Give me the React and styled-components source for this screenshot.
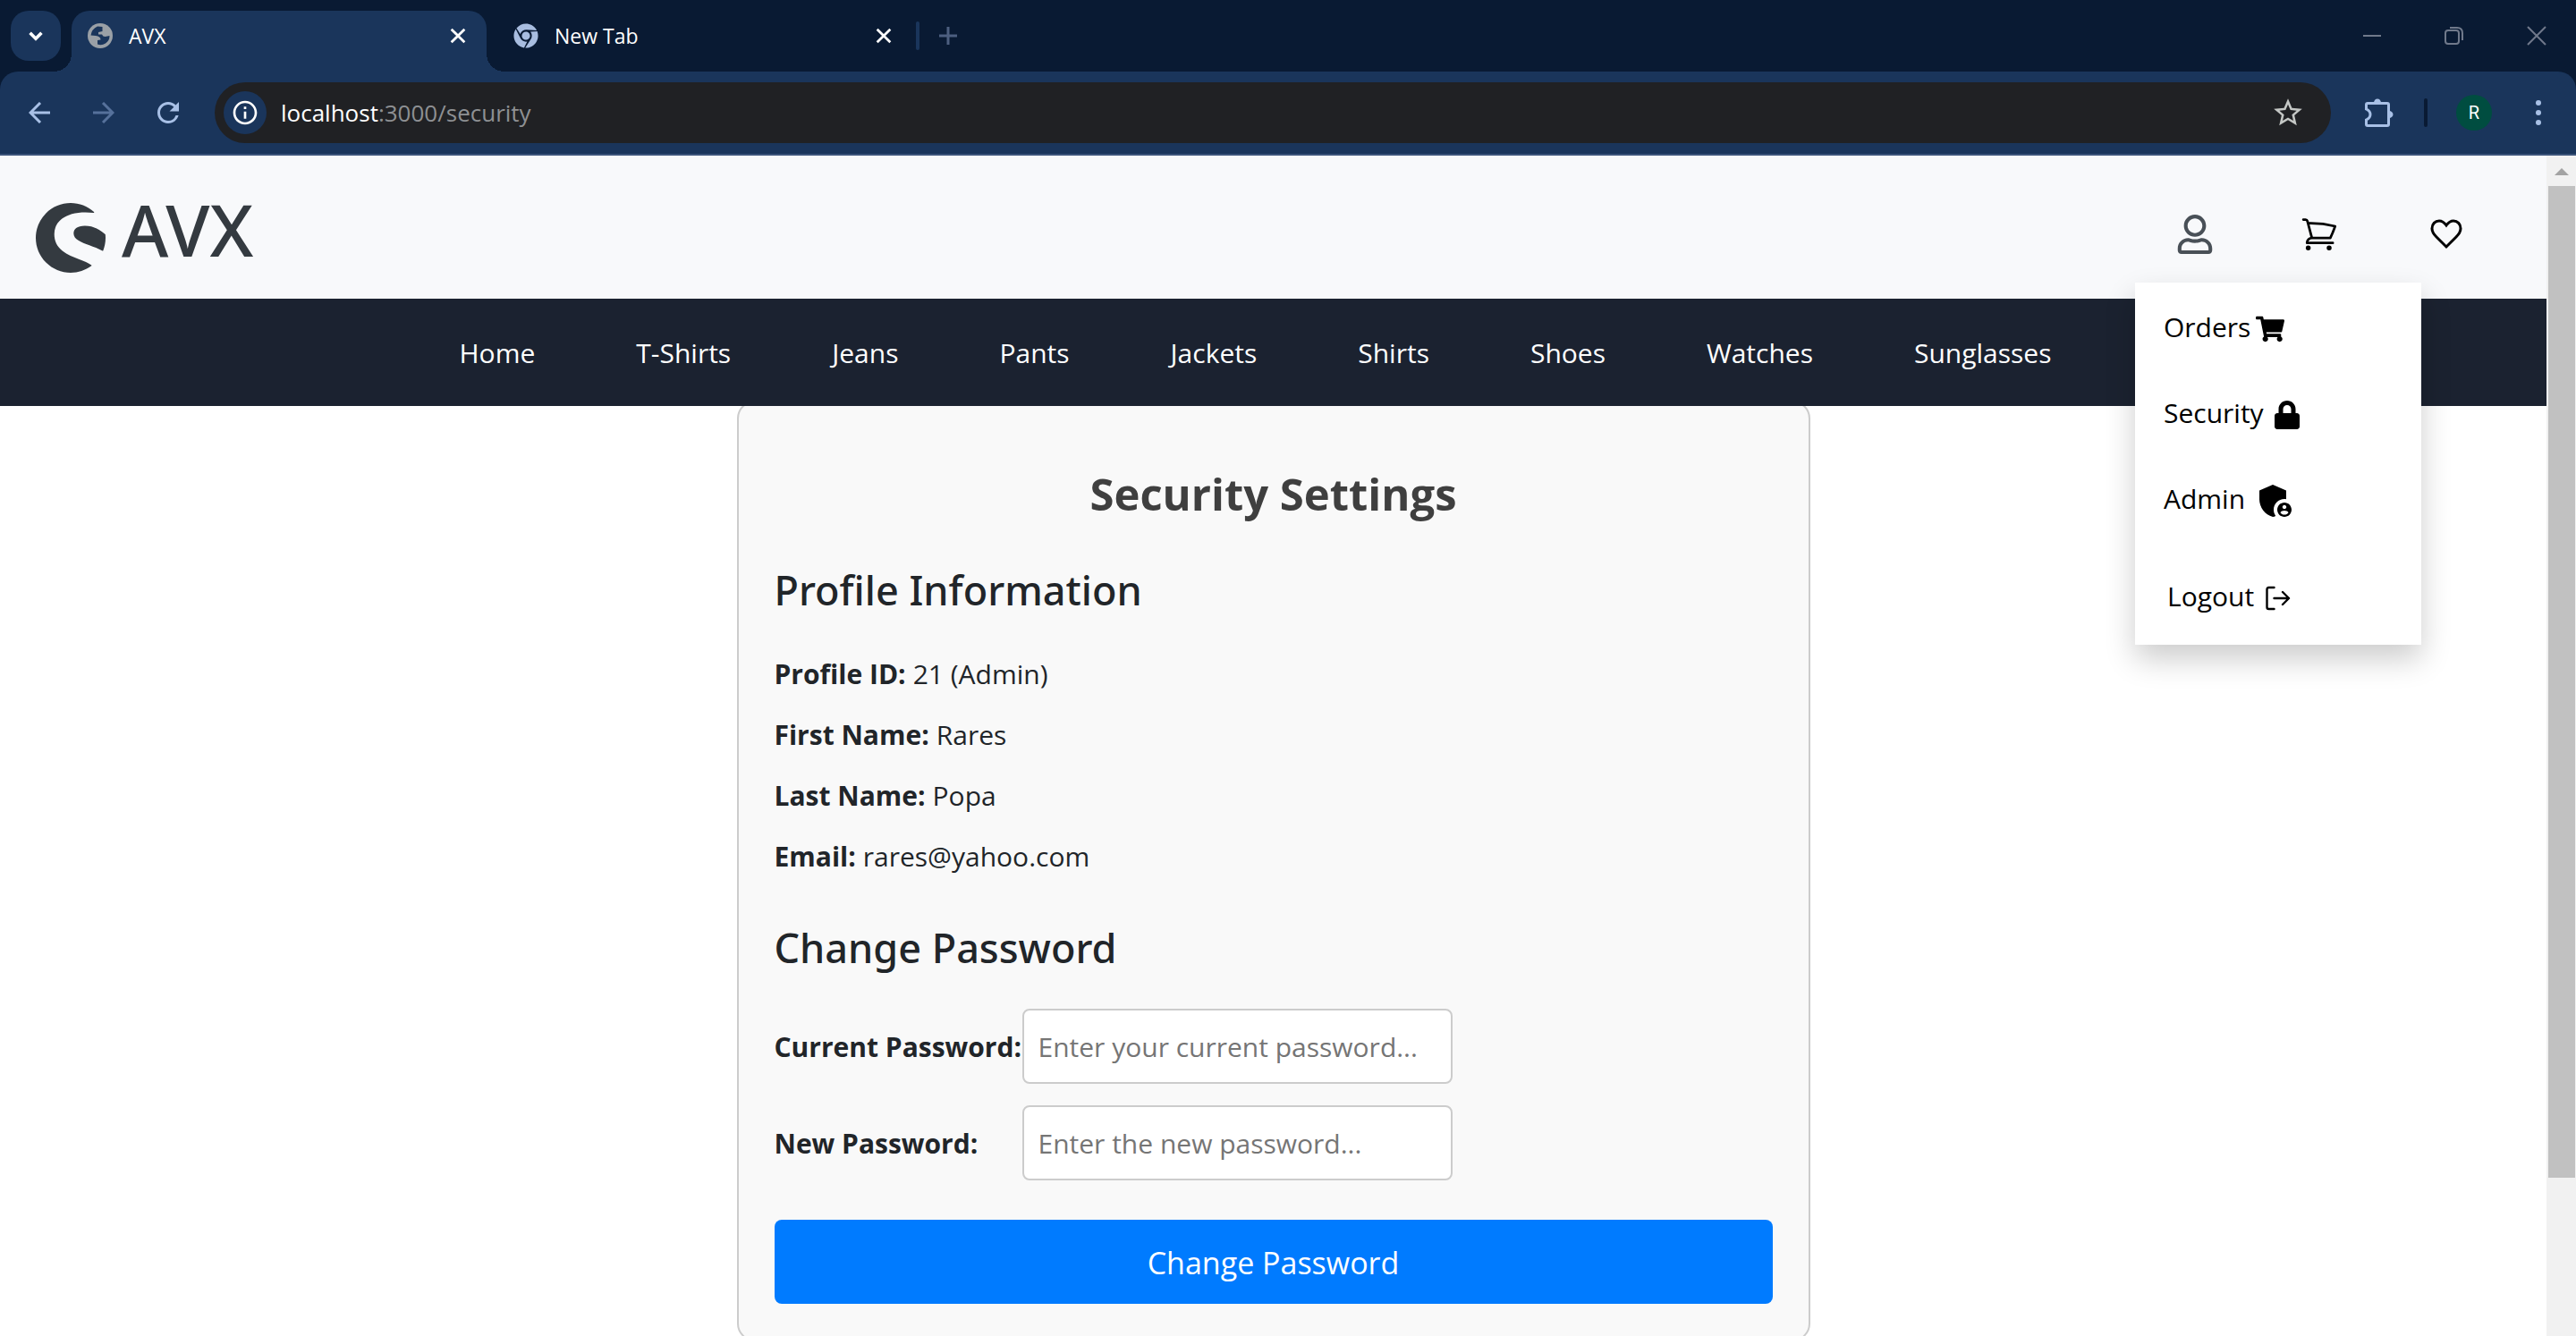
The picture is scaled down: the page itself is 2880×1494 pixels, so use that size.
import React from "react";
import styled, { createGlobalStyle } from "styled-components";
import { FaRegUser, FaShoppingCart, FaLock, FaChrome } from "react-icons/fa";
import { HiOutlineShoppingCart } from "react-icons/hi2";
import { MdAdminPanelSettings, MdStarOutline, MdRefresh, MdOutlineInfo } from "react-icons/md";
import { SiShopware } from "react-icons/si";

const Global = createGlobalStyle`
  * { box-sizing: border-box; }
  body { margin: 0; overflow: hidden; background: #fff; }
  body, button, input { font-family: "Open Sans", "Noto Sans", sans-serif; }
  h1, h2, p, dl, dd, ul { margin: 0; padding: 0; }
  svg { display: block; flex: none; }
`;
const Window = styled.div`display: flex; flex-direction: column; height: 100vh; overflow: hidden;`;
const IconButton = styled.button`
  display: flex; align-items: center; justify-content: center; flex: none;
  width: 48px; height: 48px; padding: 0; border: 0; background: none;
  color: ${(p) => p.$color || "#a8c0e6"};
`;

/* Browser frame */
const TabStrip = styled.div`display: flex; align-items: flex-end; height: 80px; padding: 0 20px 0 12px; background: #091a33; flex: none;`;
const TabSearch = styled.button`
  display: flex; align-items: center; justify-content: center; width: 56px; height: 56px; margin: 0 12px 12px 0;
  padding: 0; border: 0; border-radius: 20px; background: #1a355b; color: #fff;
`;
const Tabs = styled.div`display: flex; gap: 12px;`;
const Tab = styled.div`
  position: relative; display: flex; align-items: center; gap: 18px; width: 464px; height: 68px;
  padding: 0 8px 12px 18px; border-radius: 20px 20px 0 0; color: #fff; font-size: 23px; line-height: 32px;
  background: ${(p) => (p.$active ? "#1a355b" : "transparent")};
  &::before, &::after {
    content: ${(p) => (p.$active ? '""' : "none")}; position: absolute; bottom: 0; width: 20px; height: 20px;
  }
  &::before { right: 100%; background: radial-gradient(circle at 0 0, transparent 20px, #1a355b 20px); }
  &::after { left: 100%; background: radial-gradient(circle at 100% 0, transparent 20px, #1a355b 20px); }
  & > span { flex: 1; }
`;
const TabDivider = styled.span`width: 4px; height: 32px; margin: 0 8px 24px 4px; border-radius: 2px; background: #1a355b;`;
const NewTab = styled.div`display: flex; padding-bottom: 16px;`;
const WindowControls = styled.div`display: flex; gap: 44px; margin-left: auto; padding: 0 0 16px;`;
const ToolbarBack = styled.div`background: #091a33; flex: none;`;
const Toolbar = styled.div`
  display: flex; align-items: center; height: 94px; padding: 0 18px 0 20px; border-radius: 20px 20px 0 0;
  background: #1a355b; border-bottom: 2px solid #3c547a;
`;
const NavButtons = styled.div`display: flex; gap: 24px; margin-right: 28px;`;
const Omnibox = styled.div`
  display: flex; align-items: center; flex: 1; height: 68px; padding: 0 24px 0 10px; margin-right: 30px;
  border-radius: 34px; background: #202124;
`;
const InfoChip = styled.button`
  display: flex; align-items: center; justify-content: center; width: 48px; height: 48px; padding: 0;
  border: 0; border-radius: 50%; background: #1a355b; color: #fff;
`;
const Address = styled.p`
  flex: 1; padding-left: 16px; color: #8e9093; font-size: 26px; line-height: 36px;
  b { color: #fff; font-weight: 400; }
`;
const ToolbarDivider = styled.span`width: 4px; height: 32px; margin: 0 32px 0 26px; border-radius: 2px; background: #091a33;`;
const Avatar = styled.button`
  width: 40px; height: 40px; padding: 0; margin-right: 28px; border: 0; border-radius: 50%; background: #004d40;
  color: #fff; font: 20px/40px Roboto, sans-serif;
`;

/* Site */
const Viewport = styled.div`display: flex; flex: 1; min-height: 0;`;
const Page = styled.div`flex: 1; min-width: 0; overflow: hidden;`;
const Scrollbar = styled.div`display: flex; flex-direction: column; align-items: center; width: 33px; background: #f1f1f1;`;
const ScrollArrow = styled.span`
  width: 0; height: 0; margin: 14px 0 12px; border: 8px solid transparent; border-top: 0; border-bottom-color: #a3a3a3;
`;
const ScrollThumb = styled.span`width: 30px; height: 84%; background: #c1c1c1;`;
const Header = styled.header`
  display: flex; align-items: center; justify-content: space-between; height: 160px; padding: 0 90px 0 40px; background: #f8f9fb;
`;
const Brand = styled.a`
  display: flex; align-items: center; gap: 18px; color: #343a40; text-decoration: none;
  font: 500 80px/104px "Noto Sans", sans-serif;
  svg { margin-top: 24px; }
  span { margin-top: 4px; }
`;
const Actions = styled.div`display: flex; gap: 98px; margin-top: 16px;`;
const Account = styled.div`position: relative;`;
const Action = styled.button`
  display: flex; justify-content: center; width: ${(p) => p.$width || 44}px; padding: 0; border: 0; background: none;
  color: ${(p) => p.$color || "#000"};
`;
const Menu = styled.div`
  position: absolute; top: 76px; left: -48px; z-index: 2; display: flex; flex-direction: column; width: 320px; padding-bottom: 8px;
  background: #fff; box-shadow: 0 16px 32px rgba(0, 0, 0, 0.2);
  svg { margin-top: 4px; }
`;
const MenuLink = styled.a`
  display: flex; align-items: center; gap: ${(p) => p.$gap}px; height: 96px; padding: 4px 32px 0; color: #000;
  font-size: 30px; line-height: 48px; text-decoration: none;
`;
const Logout = styled.button`
  display: flex; align-items: center; gap: 10px; height: 96px; margin-top: 13px; padding: 4px 36px 0; border: 0; background: none; color: #000;
  font-size: 30px; line-height: 48px;
`;
const Categories = styled.nav`
  position: relative; z-index: 1; display: flex; align-items: center; justify-content: center; gap: 113px; height: 120px; padding: 2px 40px 0 0;
  background: #1b2230;
  a { color: #fff; font-size: 30px; line-height: 48px; text-decoration: none; }
`;
const Card = styled.main`
  width: 1200px; margin: -6px auto 0; padding: 72px 40px 40px; border: 2px solid #ccc; border-radius: 20px; background: #f9f9f9;
  color: #212529; font-size: 30px; line-height: 48px;
`;
const Title = styled.h1`color: #3f3f3f; font-size: 49px; line-height: 60px; font-weight: 700; text-align: center;`;
const SectionTitle = styled.h2`
  margin: 48px 0 ${(p) => p.$bottom}px; font: 500 45px/60px "Noto Sans", sans-serif;
`;
const Details = styled.dl`display: grid; gap: 20px;`;
const Detail = styled.div`display: flex; gap: 8px; dt { font-weight: 700; }`;
const Form = styled.form`display: grid; gap: 24px;`;
const Field = styled.div`
  display: flex; align-items: center;
  label { width: 277px; padding-top: 2px; font-weight: 700; white-space: nowrap; }
  input {
    width: 481px; height: 84px; padding: 0 16px; border: 2px solid #ccc; border-radius: 8px; background: #fff;
    font-size: 30px; line-height: 48px; color: #212529;
  }
  input::placeholder { color: #757575; opacity: 1; }
`;
const Submit = styled.button`
  height: 94px; margin-top: 20px; padding: 2px 0 0; border: 0; border-radius: 8px; background: #007bff; color: #fff;
  font-size: 34px; line-height: 48px;
`;

const Line = ({ d, size = 24, width = 2 }) => (
  <svg width={size} height={size} viewBox="0 0 24 24" fill="none" stroke="currentColor" strokeWidth={width}><path d={d} /></svg>
);
const Globe = () => (
  <svg width="28" height="28" viewBox="0 0 28 28">
    <circle cx="14" cy="14" r="14" fill="#9aa0a6" />
    <path fill="#1a355b" d="M11 3.500Q4.500 6.500 3.500 13.500L9 14Q14.500 14.500 14.500 18.500L11 19V23.500Q15.500 25.500 20 22.500Q24.500 19.500 24.500 14L19.500 15Q17 15 16 12.500H12V10L16.500 9V4Z" />
  </svg>
);
const Puzzle = () => (
  <svg width="32" height="32" viewBox="0 0 32 32">
    <path fill="none" stroke="currentColor" strokeWidth="3" d="M1.500 12V7Q1.500 5.500 3 5.500H25Q26.500 5.500 26.500 7V29Q26.500 30.500 25 30.500H3Q1.500 30.500 1.500 29V24Q6 22 6 18Q6 14 1.500 12Z" />
    <path fill="currentColor" d="M10 5a4 4.500 0 0 1 8 0ZM27 14a4.500 4 0 0 1 0 8Z" />
  </svg>
);
const Heart = () => (
  <svg width="44" height="44" viewBox="0 0 44 44" fill="none" stroke="currentColor" strokeWidth="3">
    <path d="M22 12C19.500 8.500 17 7 14 7C9.500 7 6 10.500 6 15.500C6 19.500 8 22 11 25L22 36L33 25C36 22 38 19.500 38 15.500C38 10.500 34.500 7 30 7C27 7 24.500 8.500 22 12Z" />
  </svg>
);
const LogoutIcon = () => (
  <svg width="32" height="32" viewBox="0 0 32 32" fill="none" stroke="currentColor" strokeWidth="2.400" strokeLinecap="round" strokeLinejoin="round">
    <path d="M12.500 4H6.500Q4.500 4 4.500 6V26Q4.500 28 6.500 28H12.500M12.500 16H29M22 9 29 16 22 23" />
  </svg>
);
const CLOSE = "M4 4 20 20M20 4 4 20";
const categories = ["Home", "T-Shirts", "Jeans", "Pants", "Jackets", "Shirts", "Shoes", "Watches", "Sunglasses"];
const profile = [["Profile ID:", "21 (Admin)"], ["First Name:", "Rares"], ["Last Name:", "Popa"], ["Email:", "rares@yahoo.com"]];

export default function App() {
  return (
    <Window>
      <Global />
      <TabStrip>
        <TabSearch aria-label="Search tabs"><Line d="M5 8.500 12 15.500 19 8.500" width={4} size={22} /></TabSearch>
        <Tabs>
          <Tab $active>
            <Globe /><span>AVX</span>
            <IconButton aria-label="Close tab" $color="#fff"><Line d={CLOSE} width={3} size={22} /></IconButton>
          </Tab>
          <Tab>
            <FaChrome size={28} color="#a8bde0" /><span>New Tab</span>
            <IconButton aria-label="Close tab" $color="#fff"><Line d={CLOSE} width={3} size={22} /></IconButton>
          </Tab>
        </Tabs>
        <TabDivider />
        <NewTab><IconButton aria-label="New tab" $color="#4d5f80"><Line d="M12 2V22M2 12H22" width={3} /></IconButton></NewTab>
        <WindowControls>
          <IconButton aria-label="Minimise" $color="#70798b"><Line d="M2 12H22" /></IconButton>
          <IconButton aria-label="Restore" $color="#70798b"><Line d="M5 6H14Q17 6 17 9V18Q17 21 14 21H5Q2 21 2 18V9Q2 6 5 6ZM7 3H15Q21 3 21 9V17" /></IconButton>
          <IconButton aria-label="Close" $color="#70798b"><Line d="M2 2 22 22M22 2 2 22" /></IconButton>
        </WindowControls>
      </TabStrip>
      <ToolbarBack>
        <Toolbar>
          <NavButtons>
            <IconButton aria-label="Back"><Line d="M24 12H2M13 1 2 12 13 23" width={3} /></IconButton>
            <IconButton aria-label="Forward" $color="#56719b"><Line d="M0 12H22M11 1 22 12 11 23" width={3} /></IconButton>
            <IconButton aria-label="Reload"><MdRefresh size={36} /></IconButton>
          </NavButtons>
          <Omnibox>
            <InfoChip aria-label="Site information"><MdOutlineInfo size={32} /></InfoChip>
            <Address><b>localhost</b>:3000/security</Address>
            <IconButton aria-label="Bookmark" $color="#c4c7c5"><MdStarOutline size={38} /></IconButton>
          </Omnibox>
          <IconButton aria-label="Extensions"><Puzzle /></IconButton>
          <ToolbarDivider />
          <Avatar>R</Avatar>
          <IconButton aria-label="Menu">
            <svg width="8" height="28" viewBox="0 0 8 28" fill="currentColor"><circle cx="4" cy="3" r="3" /><circle cx="4" cy="14" r="3" /><circle cx="4" cy="25" r="3" /></svg>
          </IconButton>
        </Toolbar>
      </ToolbarBack>
      <Viewport>
        <Page>
          <Header>
            <Brand href="#"><SiShopware size={78} /><span>AVX</span></Brand>
            <Actions>
              <Account>
                <Action aria-label="Account" $color="#495057" $width={38}><FaRegUser size={44} /></Action>
                <Menu>
                  <MenuLink href="#" $gap={6}>Orders <FaShoppingCart size={32} /></MenuLink>
                  <MenuLink href="#" $gap={10}>Security <FaLock size={32} /></MenuLink>
                  <MenuLink href="#" $gap={10}>Admin <MdAdminPanelSettings size={48} /></MenuLink>
                  <Logout>Logout <LogoutIcon /></Logout>
                </Menu>
              </Account>
              <Action aria-label="Cart"><HiOutlineShoppingCart size={44} /></Action>
              <Action aria-label="Favourites"><Heart /></Action>
            </Actions>
          </Header>
          <Categories>{categories.map((c) => <a href="#" key={c}>{c}</a>)}</Categories>
          <Card>
            <Title>Security Settings</Title>
            <SectionTitle $bottom={40}>Profile Information</SectionTitle>
            <Details>{profile.map(([k, v]) => <Detail key={k}><dt>{k}</dt><dd>{v}</dd></Detail>)}</Details>
            <SectionTitle $bottom={38}>Change Password</SectionTitle>
            <Form>
              <Field><label htmlFor="current">Current Password:</label><input id="current" type="password" placeholder="Enter your current password..." /></Field>
              <Field><label htmlFor="new">New Password:</label><input id="new" type="password" placeholder="Enter the new password..." /></Field>
              <Submit type="button">Change Password</Submit>
            </Form>
          </Card>
        </Page>
        <Scrollbar><ScrollArrow /><ScrollThumb /></Scrollbar>
      </Viewport>
    </Window>
  );
}
